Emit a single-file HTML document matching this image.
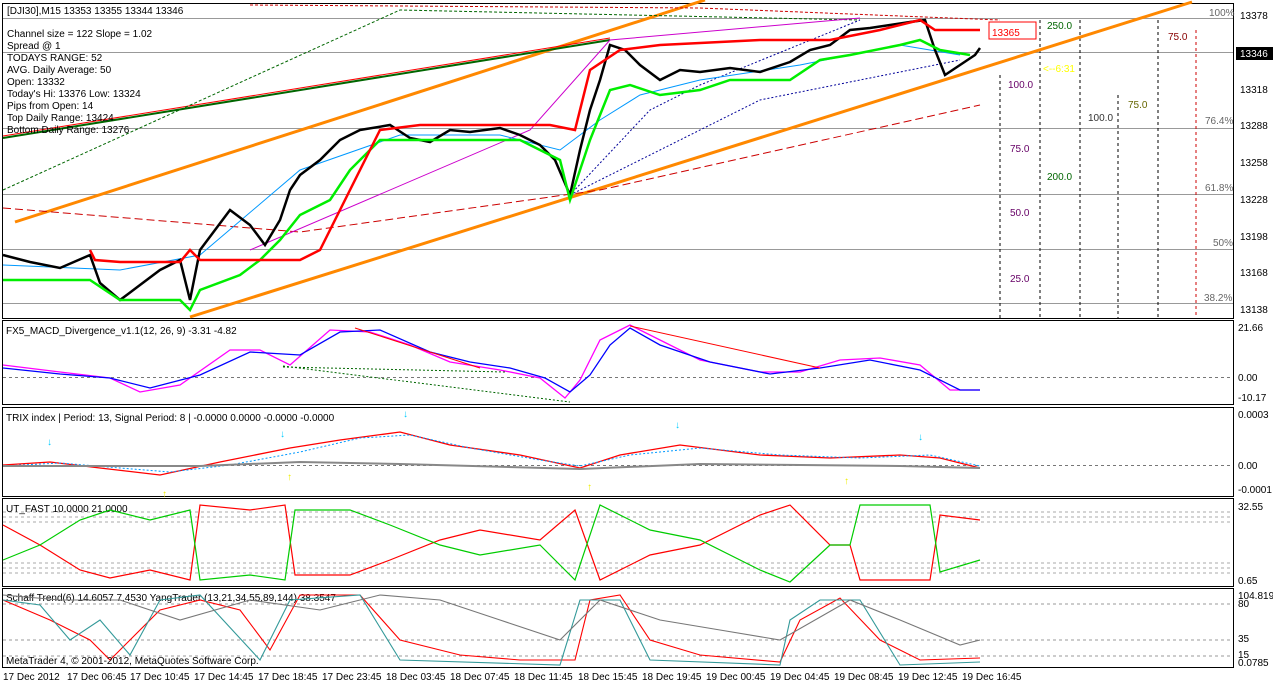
<!DOCTYPE html>
<html><head><style>
body{margin:0;background:#fff;width:1273px;height:685px;overflow:hidden;font-family:"Liberation Sans",sans-serif}
svg text{font-family:"Liberation Sans",sans-serif;font-size:10px}
</style></head><body>
<svg width="1273" height="685" viewBox="0 0 1273 685" xmlns="http://www.w3.org/2000/svg">
<rect width="1273" height="685" fill="#fff"/>
<!-- panel frames -->
<g fill="none" stroke="#000" stroke-width="1">
<rect x="2.5" y="3.5" width="1231" height="315"/>
<rect x="2.5" y="320.5" width="1231" height="84"/>
<rect x="2.5" y="407.5" width="1231" height="89"/>
<rect x="2.5" y="498.5" width="1231" height="88"/>
<rect x="2.5" y="588.5" width="1231" height="79"/>
</g>
<!-- fib grey lines -->
<g stroke="#999" stroke-width="1">
<line x1="3" y1="18.5" x2="1233" y2="18.5"/>
<line x1="3" y1="52.5" x2="1233" y2="52.5"/>
<line x1="3" y1="128.5" x2="1233" y2="128.5"/>
<line x1="3" y1="194.5" x2="1233" y2="194.5"/>
<line x1="3" y1="249.5" x2="1233" y2="249.5"/>
<line x1="3" y1="303.5" x2="1233" y2="303.5"/>
</g>
<g fill="#666" font-size="10"><text x="1209" y="16">100%</text><text x="1205" y="124">76.4%</text><text x="1205" y="191">61.8%</text><text x="1213" y="246">50%</text><text x="1204" y="301">38.2%</text></g>
<!-- dashed vertical boxes -->
<g stroke="#000" stroke-dasharray="3,3" fill="none">
<line x1="1000" y1="75" x2="1000" y2="318"/><line x1="1040" y1="20" x2="1040" y2="318"/>
<line x1="1080" y1="20" x2="1080" y2="318"/><line x1="1118" y1="95" x2="1118" y2="318"/>
<line x1="1158" y1="20" x2="1158" y2="318"/>
</g>
<line x1="1196" y1="30" x2="1196" y2="318" stroke="#c00" stroke-dasharray="3,3"/>
<g font-size="9"><text x="1047" y="29" fill="#060">250.0</text><text x="1168" y="40" fill="#800">75.0</text><text x="1008" y="88" fill="#606">100.0</text><text x="1128" y="108" fill="#660">75.0</text><text x="1088" y="121" fill="#333">100.0</text><text x="1010" y="152" fill="#606">75.0</text><text x="1047" y="180" fill="#060">200.0</text><text x="1010" y="216" fill="#606">50.0</text><text x="1010" y="282" fill="#606">25.0</text></g>
<!-- channel lines -->
<g fill="none">
<line x1="15" y1="222" x2="705" y2="0" stroke="#f80" stroke-width="3"/>
<line x1="190" y1="317" x2="1192" y2="2" stroke="#f80" stroke-width="3"/>
<line x1="3" y1="138" x2="610" y2="40" stroke="#060" stroke-width="2"/>
<line x1="3" y1="136" x2="610" y2="38" stroke="#f00" stroke-width="1"/>
<polyline points="3,208 300,232 600,190 980,105" stroke="#c00" stroke-dasharray="8,4"/>
<polyline points="3,190 400,10 860,20" stroke="#060" stroke-dasharray="3,2"/>
<polyline points="250,5 700,8 1000,20" stroke="#c00" stroke-dasharray="3,2"/>
<polyline points="570,195 650,110 700,85 860,20" stroke="#009" stroke-dasharray="2,2"/>
<polyline points="570,195 760,100 960,60" stroke="#009" stroke-dasharray="2,2"/>
<polyline points="250,250 530,130 610,40 860,18" stroke="#c0c"/>
<polyline points="3,265 120,270 200,255 300,170 400,135 500,135 560,150 600,120 640,95 700,80 800,65 900,45 960,55" stroke="#09f"/>
<!-- price -->
<polyline points="3,255 30,262 60,268 90,255 100,283 120,300 140,285 160,270 180,260 190,300 200,250 215,230 230,210 250,225 265,245 280,220 290,190 300,175 320,160 340,140 360,130 390,125 410,138 430,142 450,130 470,132 500,128 520,135 540,145 555,160 570,195 580,150 590,110 600,80 610,45 625,50 640,65 660,80 680,70 700,72 730,68 760,72 790,62 810,50 830,45 850,30 870,28 890,25 910,22 925,20 935,50 945,75 960,65 975,55 980,48" stroke="#000" stroke-width="2.5"/>
<polyline points="3,280 90,280 120,300 180,300 190,310 200,290 240,275 260,260 280,240 300,215 330,200 350,170 380,140 420,140 520,140 560,160 570,200 590,140 610,90 630,85 660,95 700,90 730,80 790,80 820,60 850,55 900,45 920,40 940,50 970,55" stroke="#0e0" stroke-width="2.5"/>
<polyline points="90,250 95,260 120,262 180,262 190,250 200,260 300,260 320,250 380,130 420,125 550,125 575,130 590,70 620,50 660,45 760,40 830,40 880,30 920,20 935,30 980,30" stroke="#f00" stroke-width="2.5"/>
</g>
<rect x="989" y="22" width="47" height="17" fill="#fff" stroke="#f00"/>
<text x="992" y="36" fill="#f00" font-size="14">13365</text>
<text x="1043" y="72" fill="#ff0" font-size="15">&lt;--6:31</text>
<g font-size="10" fill="#000">
<text x="7" y="14">[DJI30],M15  13353 13355 13344 13346</text>
<text x="7" y="37">Channel size = 122 Slope = 1.02</text>
<text x="7" y="49">Spread @ 1</text>
<text x="7" y="61">TODAYS RANGE: 52</text>
<text x="7" y="73">AVG. Daily Average: 50</text>
<text x="7" y="85">Open: 13332</text>
<text x="7" y="97">Today's Hi: 13376  Low: 13324</text>
<text x="7" y="109">Pips from Open: 14</text>
<text x="7" y="121">Top Daily Range: 13424</text>
<text x="7" y="133">Bottom Daily Range: 13276</text>
</g>
<!-- right axis labels -->
<g font-size="10" fill="#000">
<text x="1240" y="19">13378</text><text x="1240" y="56">13346</text><rect x="1236" y="47" width="37" height="13" fill="#000"/><text x="1240" y="57" fill="#fff">13346</text>
<text x="1240" y="93">13318</text><text x="1240" y="129">13288</text><text x="1240" y="166">13258</text><text x="1240" y="203">13228</text><text x="1240" y="240">13198</text><text x="1240" y="276">13168</text><text x="1240" y="313">13138</text>
<text x="1238" y="331">21.66</text><text x="1238" y="381">0.00</text><text x="1238" y="401">-10.17</text>
<text x="1238" y="418">0.0003</text><text x="1238" y="469">0.00</text><text x="1238" y="493">-0.0001</text>
<text x="1238" y="510">32.55</text><text x="1238" y="584">0.65</text>
<text x="1238" y="599">104.8193</text><text x="1238" y="607">80</text><text x="1238" y="642">35</text><text x="1238" y="658">15</text><text x="1238" y="666">0.0785</text>
</g>
<!-- MACD -->
<line x1="3" y1="377.5" x2="1233" y2="377.5" stroke="#777" stroke-dasharray="3,3"/>
<text x="6" y="334" font-size="10">FX5_MACD_Divergence_v1.1(12, 26, 9) -3.31 -4.82</text>
<g fill="none">
<polyline points="3,365 60,372 110,378 140,392 180,385 230,350 260,350 290,365 330,330 370,332 410,345 450,362 500,370 540,378 565,398 580,380 600,340 630,325 660,340 700,360 760,372 800,372 840,360 880,358 920,365 950,390 980,390" stroke="#f0f" stroke-width="1.3"/>
<polyline points="3,368 60,374 110,378 150,388 200,375 250,352 300,355 340,332 380,330 430,352 470,362 510,368 545,378 570,392 590,375 610,345 630,328 660,345 710,362 770,374 820,368 870,360 920,370 960,390 980,390" stroke="#00f" stroke-width="1.3"/>
<line x1="283" y1="366" x2="570" y2="402" stroke="#060" stroke-dasharray="2,2"/>
<line x1="283" y1="367" x2="505" y2="372" stroke="#060" stroke-dasharray="2,2"/>
<line x1="355" y1="328" x2="480" y2="368" stroke="#f00"/>
<line x1="630" y1="326" x2="820" y2="368" stroke="#f00"/>
</g>
<!-- TRIX -->
<line x1="3" y1="465.5" x2="1233" y2="465.5" stroke="#777" stroke-dasharray="3,3"/>
<text x="6" y="421" font-size="10">TRIX index | Period: 13, Signal Period: 8 |  -0.0000 0.0000 -0.0000 -0.0000</text>
<g fill="none">
<polyline points="3,465 50,462 100,468 160,475 220,462 290,448 340,440 400,432 450,445 520,455 580,468 620,455 680,445 760,455 830,458 900,455 940,458 980,468" stroke="#f00" stroke-width="1.3"/>
<polyline points="3,466 60,463 120,468 170,472 230,465 300,452 360,438 410,435 470,448 540,460 580,466 630,455 700,448 780,455 860,458 930,455 980,466" stroke="#09f" stroke-dasharray="2,2"/>
<polyline points="3,466 200,466 300,462 400,464 580,469 700,464 900,466 980,468" stroke="#888" stroke-width="2"/>
</g>
<g font-size="12"><text x="47" y="445" fill="#0cf">↓</text><text x="280" y="437" fill="#0cf">↓</text><text x="403" y="417" fill="#0cf">↓</text><text x="675" y="428" fill="#0cf">↓</text><text x="918" y="440" fill="#0cf">↓</text>
<text x="162" y="497" fill="#ee0">↑</text><text x="287" y="480" fill="#ee0">↑</text><text x="587" y="490" fill="#ee0">↑</text><text x="844" y="484" fill="#ee0">↑</text></g>
<!-- UT_FAST -->
<g stroke="#aaa" stroke-dasharray="3,3"><line x1="3" y1="512" x2="1233" y2="512"/><line x1="3" y1="517" x2="1233" y2="517"/><line x1="3" y1="522" x2="1233" y2="522"/><line x1="3" y1="563" x2="1233" y2="563"/><line x1="3" y1="568" x2="1233" y2="568"/><line x1="3" y1="573" x2="1233" y2="573"/></g>
<text x="6" y="512" font-size="10">UT_FAST 10.0000 21.0000</text>
<g fill="none" stroke-width="1.2">
<polyline points="3,525 40,545 80,570 110,578 150,570 190,580 200,505 250,510 285,505 295,575 350,575 390,560 440,540 480,530 540,540 575,510 600,580 650,555 700,545 760,515 790,505 830,545 850,545 860,580 930,580 940,515 980,520" stroke="#f00"/>
<polyline points="3,560 40,545 80,520 110,510 150,520 190,510 200,580 250,575 285,580 295,510 350,510 390,525 440,545 480,555 540,545 575,580 600,505 650,530 700,540 760,570 790,582 830,545 850,545 860,505 930,505 940,572 980,560" stroke="#0c0"/>
</g>
<!-- Schaff -->
<g stroke="#999" stroke-dasharray="3,3"><line x1="3" y1="604" x2="1233" y2="604"/><line x1="3" y1="640" x2="1233" y2="640"/><line x1="3" y1="656" x2="1233" y2="656"/></g>
<text x="6" y="601" font-size="10">Schaff Trend(6) 14.6057 7.4530  YangTrader (13,21,34,55,89,144) 38.3547</text>
<g fill="none" stroke-width="1.1">
<polyline points="3,600 50,620 90,640 110,660 130,640 160,610 200,600 240,610 270,650 300,595 360,595 400,640 460,655 520,660 575,660 590,600 620,595 650,640 700,655 780,662 800,620 840,598 880,640 920,660 980,658" stroke="#f00"/>
<polyline points="3,600 40,605 70,640 100,620 130,655 160,600 200,595 260,660 290,600 360,595 400,660 560,665 580,600 620,600 650,660 780,665 790,620 820,600 860,600 900,665 980,662" stroke="#399"/>
<polyline points="3,595 60,600 120,600 180,620 250,600 320,610 380,595 440,600 500,620 560,640 600,600 660,620 720,630 780,640 850,600 900,620 960,645 980,640" stroke="#777"/>
</g>
<text x="6" y="664" font-size="10">MetaTrader 4, © 2001-2012, MetaQuotes Software Corp.</text>
<!-- time axis -->
<g font-size="9" fill="#000">
<text x="3" y="680">17 Dec 2012</text><text x="67" y="680">17 Dec 06:45</text><text x="130" y="680">17 Dec 10:45</text><text x="194" y="680">17 Dec 14:45</text><text x="258" y="680">17 Dec 18:45</text><text x="322" y="680">17 Dec 23:45</text><text x="386" y="680">18 Dec 03:45</text><text x="450" y="680">18 Dec 07:45</text><text x="514" y="680">18 Dec 11:45</text><text x="578" y="680">18 Dec 15:45</text><text x="642" y="680">18 Dec 19:45</text><text x="706" y="680">19 Dec 00:45</text><text x="770" y="680">19 Dec 04:45</text><text x="834" y="680">19 Dec 08:45</text><text x="898" y="680">19 Dec 12:45</text><text x="962" y="680">19 Dec 16:45</text>
</g>
</svg>
</body></html>
